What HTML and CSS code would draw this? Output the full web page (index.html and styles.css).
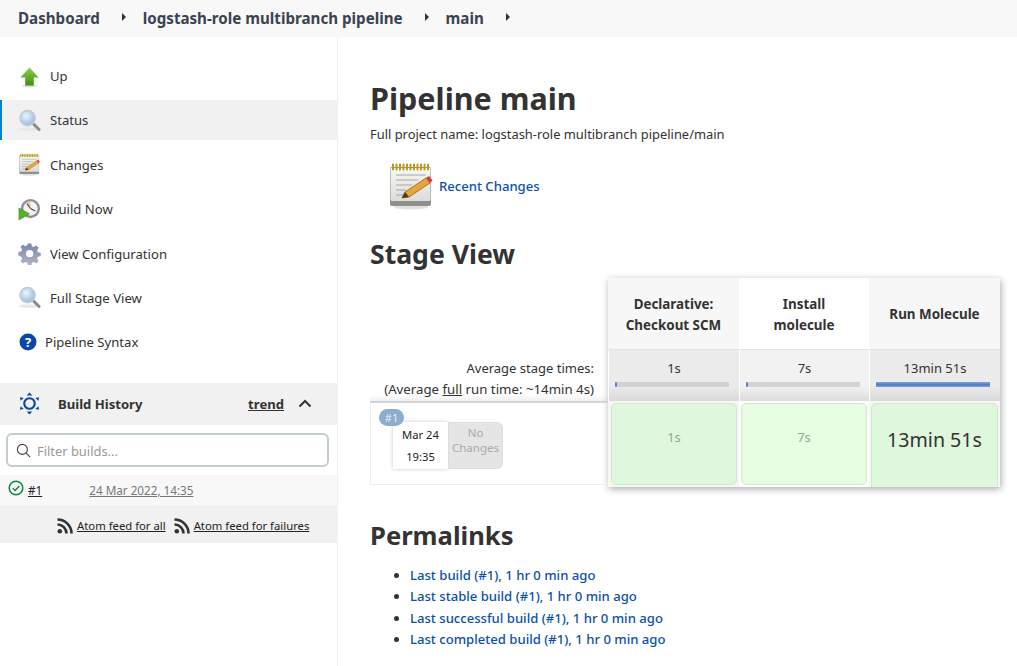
FILE: index.html
```html
<!DOCTYPE html>
<html lang="en">
<head>
<meta charset="utf-8">
<title>main [Jenkins]</title>
<link rel="stylesheet" href="styles.css">
</head>
<body>
<svg class="defs" width="0" height="0">
  <defs>
    <linearGradient id="gGreen" x1="0" y1="0" x2="0" y2="1"><stop offset="0" stop-color="#8fd14f"/><stop offset="1" stop-color="#3c8f10"/></linearGradient>
    <radialGradient id="gLens" cx=".4" cy=".35" r=".7"><stop offset="0" stop-color="#eef5fc"/><stop offset="1" stop-color="#8fb6e3"/></radialGradient>
    <linearGradient id="gGear" x1="0" y1="0" x2="0" y2="1"><stop offset="0" stop-color="#7b86ab"/><stop offset="1" stop-color="#b3b5c9"/></linearGradient>
    <linearGradient id="gPaper" x1="0" y1="0" x2="0" y2="1"><stop offset="0" stop-color="#f6f6f4"/><stop offset="1" stop-color="#dcdcd8"/></linearGradient>
    <symbol id="i-lens" viewBox="0 0 24 24">
      <ellipse cx="11" cy="21" rx="10" ry="2" fill="#e8e8e8"/>
      <path d="M15.5 15l6.5 6.5" stroke="#8a8a8a" stroke-width="3" stroke-linecap="round"/>
      <circle cx="10" cy="9.500" r="7.800" fill="url(#gLens)" stroke="#c0cbd6" stroke-width="1.800"/>
    </symbol>
    <symbol id="i-note" viewBox="0 0 48 48">
      <ellipse cx="24" cy="45" rx="17" ry="2.500" fill="#e2e2e2"/>
      <rect x="3" y="5" width="41" height="39" rx="2" fill="#8f8f8b"/>
      <path d="M3.500 6h40v32l-1 1H4.500l-1-1z" fill="url(#gPaper)"/>
      <path d="M9 13h30M9 18h22M9 23h16M9 28h10M9 33h8" stroke="#a8a8a8" stroke-width="1.200"/>
      <path d="M6 2.500v5M9.500 2.500v5M13 2.500v5M16.500 2.500v5M20 2.500v5M23.500 2.500v5M27 2.500v5M30.500 2.500v5M34 2.500v5M37.500 2.500v5M41 2.500v5" stroke="#b89a14" stroke-width="2" stroke-linecap="round"/>
      <path d="M15 36l3-6 21-14 4 5-21 14z" fill="#e8a53a" stroke="#8f6516" stroke-width=".8"/>
      <path d="M15 36l3-6 4 5z" fill="#4d3a1a"/>
      <path d="M39 16l3-2 3.500 4.500-2.500 2.500z" fill="#e0323a"/>
    </symbol>
    <symbol id="i-rss" viewBox="0 0 16 16">
      <circle cx="2.800" cy="13.200" r="2.300" fill="#333"/>
      <path d="M.5 6.500a9 9 0 0 1 9 9" fill="none" stroke="#333" stroke-width="2.600"/>
      <path d="M.5 1.500a14 14 0 0 1 14 14" fill="none" stroke="#333" stroke-width="2.600"/>
    </symbol>
  </defs>
</svg>

<nav class="breadcrumbs">
  <a class="crumb crumb-first">Dashboard</a><span class="caret"></span>
  <a class="crumb">logstash-role multibranch pipeline</a><span class="caret"></span>
  <a class="crumb">main</a><span class="caret"></span>
</nav>

<div class="page">
  <aside class="sidebar">
    <ul class="tasks">
      <li class="task">
        <svg class="task-icon" viewBox="0 0 24 24"><ellipse cx="12" cy="22" rx="8" ry="1.500" fill="#ddd"/><path d="M12 2.500L21.500 13H16.500V21.500H7.500V13H2.500z" fill="url(#gGreen)"/></svg>
        <span>Up</span>
      </li>
      <li class="task task-active">
        <svg class="task-icon"><use href="#i-lens"/></svg>
        <span>Status</span>
      </li>
      <li class="task">
        <svg class="task-icon"><use href="#i-note"/></svg>
        <span>Changes</span>
      </li>
      <li class="task">
        <svg class="task-icon" viewBox="0 0 24 24"><circle cx="13" cy="11" r="10" fill="#8d8aa6"/><circle cx="13" cy="11" r="7.500" fill="#f4f3ee"/><path d="M13 11V3.500a7.500 7.500 0 0 0-5 2z" fill="#e3cf9a"/><path d="M13 11l5 2.500" stroke="#444" stroke-width="1.200"/><path d="M13 11L9.500 6" stroke="#444" stroke-width="1.200"/><path d="M1 10.500L12 16.500 1 23z" fill="#58b324" stroke="#3c8f10" stroke-width=".6"/></svg>
        <span>Build Now</span>
      </li>
      <li class="task">
        <svg class="task-icon" viewBox="0 0 24 24"><path fill="url(#gGear)" fill-rule="evenodd" d="M10 .5h4l.6 3.300 2.300 1 2.800-1.900 2.800 2.800-1.900 2.800 1 2.300 3.300.6v4l-3.300.6-1 2.300 1.900 2.800-2.800 2.800-2.800-1.900-2.300 1-.6 3.300h-4l-.6-3.300-2.300-1-2.800 1.900-2.800-2.800 1.900-2.800-1-2.300L-1 14.400v-4l3.300-.6 1-2.300-1.900-2.800 2.800-2.800 2.800 1.900 2.300-1zM12 8.200a4.200 4.200 0 1 0 0 8.400 4.200 4.200 0 0 0 0-8.400z" transform="translate(1.300 1) scale(.9)"/></svg>
        <span>View Configuration</span>
      </li>
      <li class="task">
        <svg class="task-icon"><use href="#i-lens"/></svg>
        <span>Full Stage View</span>
      </li>
      <li class="task task-help">
        <svg class="help-icon" viewBox="0 0 18 18"><circle cx="9" cy="9" r="8.500" fill="#0b47a8"/><text class="help-mark" x="9" y="13.500" text-anchor="middle">?</text></svg>
        <span>Pipeline Syntax</span>
      </li>
    </ul>

    <section class="history">
      <header class="history-head">
        <svg class="history-icon" viewBox="0 0 24 24"><circle cx="12" cy="12" r="5.500" fill="none" stroke="#0b47a8" stroke-width="2.200"/><path fill="#0b47a8" d="M12 .5l3 3.200H9zM12 23.500l-3-3.200h6zM2 5.500l4 .8-3.300 2.900zM22 5.500l-.7 3.700L18 6.300zM2 18.500l.7-3.700L6 17.700zM22 18.500l-4-.8 3.300-2.900z"/></svg>
        <span class="history-title">Build History</span>
        <a class="trend">trend</a>
        <svg class="collapse" viewBox="0 0 14 9"><path d="M1.500 7.500L7 2l5.500 5.500" fill="none" stroke="#333" stroke-width="2"/></svg>
      </header>
      <div class="filter-wrap">
        <div class="filter">
          <svg class="filter-icon" viewBox="0 0 16 16"><circle cx="6.800" cy="6.800" r="5.300" fill="none" stroke="#444" stroke-width="1.200"/><path d="M10.800 10.800L15 15" stroke="#444" stroke-width="1.200"/></svg>
          <span class="filter-text">Filter builds...</span>
        </div>
      </div>
      <div class="build-row">
        <svg class="build-ok" viewBox="0 0 16 16"><circle cx="8" cy="8" r="6.800" fill="none" stroke="#138347" stroke-width="1.500"/><path d="M4.800 8.200l2.300 2.300 4.200-4.500" fill="none" stroke="#138347" stroke-width="1.500"/></svg>
        <a class="build-num">#1</a>
        <a class="build-date">24 Mar 2022, 14:35</a>
      </div>
      <div class="feeds">
        <svg class="rss"><use href="#i-rss"/></svg><a class="feed">Atom feed for all</a>
        <svg class="rss rss-second"><use href="#i-rss"/></svg><a class="feed">Atom feed for failures</a>
      </div>
    </section>
  </aside>

  <main class="main">
    <h1 class="title">Pipeline main</h1>
    <p class="fullname">Full project name: logstash-role multibranch pipeline/main</p>
    <div class="recent">
      <svg class="recent-icon"><use href="#i-note"/></svg>
      <a class="link">Recent Changes</a>
    </div>

    <h2 class="section section-stage">Stage View</h2>
    <div class="stage">
      <div class="stage-left">
        <div class="avg-label">
          <div>Average stage times:</div>
          <div class="avg-full">(Average <u>full</u> run time: ~14min 4s)</div>
        </div>
        <div class="run">
          <span class="badge">#1</span>
          <div class="run-date"><span>Mar 24</span><span>19:35</span></div>
          <div class="run-changes">No Changes</div>
        </div>
      </div>
      <div class="stage-grid">
        <div class="col col-odd">
          <div class="stage-name">Declarative: Checkout SCM</div>
          <div class="avg avg-odd"><span>1s</span><div class="bar"><i class="fill fill-s"></i></div></div>
          <div class="cell-wrap"><div class="cell cell-a cell-faded">1s</div></div>
        </div>
        <div class="col col-even">
          <div class="stage-name">Install molecule</div>
          <div class="avg avg-even"><span>7s</span><div class="bar"><i class="fill fill-s"></i></div></div>
          <div class="cell-wrap"><div class="cell cell-b cell-faded">7s</div></div>
        </div>
        <div class="col col-odd">
          <div class="stage-name">Run Molecule</div>
          <div class="avg avg-odd"><span>13min 51s</span><div class="bar"><i class="fill fill-l"></i></div></div>
          <div class="cell-wrap"><div class="cell cell-a cell-big">13min 51s</div></div>
        </div>
      </div>
    </div>

    <h2 class="section section-perma">Permalinks</h2>
    <ul class="permalinks">
      <li><a class="link">Last build (#1), 1 hr 0 min ago</a></li>
      <li><a class="link">Last stable build (#1), 1 hr 0 min ago</a></li>
      <li><a class="link">Last successful build (#1), 1 hr 0 min ago</a></li>
      <li><a class="link">Last completed build (#1), 1 hr 0 min ago</a></li>
    </ul>
  </main>
</div>
</body>
</html>
```

FILE: styles.css
```css
* { box-sizing: border-box; }
html, body { margin: 0; height: 666px; overflow: hidden; }
body { font-family: "Noto Sans", "Open Sans", sans-serif; font-size: 13.1px; color: #333; background: #fff; }
.defs { position: absolute; }
ul { list-style: none; margin: 0; padding: 0; }
a { color: inherit; }

.breadcrumbs { height: 37px; padding-bottom: 2px; background: #f8f8f8; display: flex; align-items: center; font-size: 15.15px; font-weight: 700; color: #3a4350; }
.crumb-first { margin-left: 18px; }
.caret { width: 0; height: 0; margin: -1px 17px 0 22px; border-left: 4px solid #333; border-top: 4px solid transparent; border-bottom: 4px solid transparent; }

.page { display: flex; height: 629px; }
.sidebar { width: 338px; flex: none; border-right: 1px solid #f0f0f0; padding-top: 19px; }

.tasks { display: flex; flex-direction: column; gap: 4.4px; }
.task { height: 40px; display: flex; align-items: center; padding-left: 18px; gap: 9px; color: #333; }
.task-active { background: #f1f1f1; box-shadow: inset 2px 0 0 #0a7fd0; }
.task-icon { width: 23px; height: 23px; flex: none; }
.task-help { gap: 8px; padding-left: 19px; }
.help-icon { width: 18px; height: 18px; flex: none; }
.help-mark { font-family: "Noto Sans", sans-serif; font-size: 13px; font-weight: 700; fill: #fff; }

.history { margin-top: 21px; }
.history-head { height: 42px; background: #f1f1f1; display: flex; align-items: center; padding: 0 0 1px 18px; }
.history-icon { width: 23px; height: 23px; flex: none; }
.history-title { margin-left: 17px; font-weight: 700; }
.trend { margin-left: auto; font-weight: 700; text-decoration: underline; }
.collapse { width: 14px; height: 9px; margin: 0 25px 0 14px; }
.filter-wrap { padding: 8px 8px 8px 6px; height: 50px; }
.filter { height: 34px; border: 2px solid #c3ccd1; border-radius: 6px; display: flex; align-items: center; padding-left: 8px; gap: 6px; }
.filter-icon { width: 15px; height: 15px; }
.filter-text { color: #999; font-size: 12.9px; padding-top: 1px; }
.build-row { height: 31px; background: #f8f8f8; display: flex; align-items: center; font-size: 11.7px; padding: 0 0 2px 8px; }
.build-ok { width: 16px; height: 16px; margin-top: -3px; }
.build-num { margin-left: 4px; color: #222; text-decoration: underline; }
.build-date { margin-left: 47px; color: #777; text-decoration: underline; }
.feeds { height: 37px; background: #f1f1f1; display: flex; align-items: center; font-size: 11.3px; padding: 2px 0 0 57px; }
.rss { width: 16px; height: 16px; flex: none; margin-right: 4px; }
.rss-second { margin-left: 8px; }
.feed { text-decoration: underline; color: #222; }

.main { flex: 1; padding-left: 32px; min-width: 0; }
.title { margin: 41px 0 0; font-size: 30.5px; line-height: 40px; font-weight: 700; color: #333; }
.fullname { margin: 7px 0 0; font-size: 12.9px; line-height: 18px; }
.recent { display: flex; align-items: center; margin: 19px 0 0 17px; height: 48px; }
.recent-icon { width: 48px; height: 48px; flex: none; margin-right: 4px; }
.link { color: #0b4fb0; font-weight: 500; }

.section { margin: 0; font-size: 26.6px; line-height: 36px; font-weight: 700; color: #333; }
.section-stage { margin-top: 26px; }
.stage { display: flex; margin-top: 6px; height: 209px; }
.stage-left { width: 238px; flex: none; padding-top: 71px; display: flex; flex-direction: column; }
.avg-label { height: 52px; padding: 9px 14px 0 0; text-align: right; line-height: 21px; font-size: 13px; box-shadow: inset 0 -8px 8px -8px #ddd; }
.avg-full { font-size: 13.25px; }
.run { position: relative; height: 84px; border: 1px solid #ededed; border-top: 2px solid #d4d4d4; border-right: 0; display: flex; padding: 19px 0 0 22px; }
.badge { position: absolute; left: 8px; top: 6px; width: 25px; height: 17px; border-radius: 9px; background: #8cacd0; color: #e8eef6; font-size: 11px; text-align: center; line-height: 17px; z-index: 1; }
.run-date { width: 55px; height: 47px; background: #fff; box-shadow: 0 0 4px #ccc; display: flex; flex-direction: column; align-items: center; justify-content: space-between; font-size: 11.2px; padding: 5px 0; color: #222; }
.run-changes { width: 55px; height: 47px; background: #e5e5e5; border: 1px solid #ddd; border-radius: 0 6px 6px 0; color: #aaa; font-size: 11.500px; line-height: 15px; text-align: center; padding-top: 2px; }

.stage-grid { width: 392px; height: 209px; flex: none; display: grid; grid-template-columns: 131px 130px 131px; box-shadow: 1px 2px 7px #aaa; overflow: hidden; }
.col { display: flex; flex-direction: column; }
.stage-name { height: 71px; display: flex; align-items: center; justify-content: center; text-align: center; font-size: 13.4px; font-weight: 700; line-height: 21px; padding: 2px 15px 0; color: #333; }
.col-odd .stage-name { background: #f7f7f7; }
.col-even .stage-name { background: #fff; }
.avg { height: 52px; text-align: center; padding-top: 8px; border-top: 1px solid #e4e4e4; border-left: 1px solid #fff; font-size: 13px; line-height: 20px; }
.avg-odd { background: linear-gradient(#ebebeb 70%, #d9d9d9); }
.avg-even { background: linear-gradient(#f2f2f2 70%, #dcdcdc); }
.bar { width: 114px; height: 5px; margin: 4px 0 0 6px; background: #d2d2d2; display: flex; }
.fill { display: block; height: 5px; background: linear-gradient(#86a6dc, #4f7cc9 50%, #7d9fd9); }
.fill-s { width: 2px; }
.fill-l { width: 100%; }
.cell-wrap { flex: 1; padding: 2px 2px 0; }
.col:first-child .cell-wrap { padding-left: 3px; }
.col-odd .cell-wrap { background: #f4f8f3; }
.cell { height: 82px; border: 1px solid #d5e5d2; border-radius: 5px; text-align: center; display: flex; align-items: center; justify-content: center; padding-bottom: 14px; }
.cell-a { background: #dff7dc; }
.cell-b { background: #e6fde2; }
.cell-faded { color: #97a697; font-size: 13px; }
.cell-big { height: 90px; font-size: 19.6px; color: #333; padding-bottom: 18px; }

.section-perma { margin-top: 31px; font-size: 25.6px; }
.permalinks { list-style: disc; margin-top: 11px; padding-left: 40px; line-height: 21.400px; }
```
